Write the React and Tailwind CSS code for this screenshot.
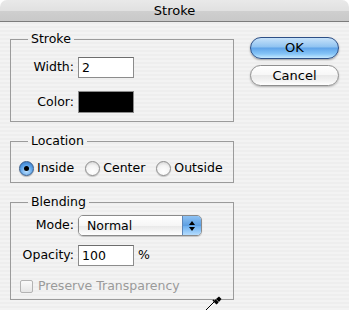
import React from "react";

const font = { fontFamily: '"DejaVu Sans", "Liberation Sans", sans-serif' };

const Radio = ({ checked, label }) => (
  <label className="flex items-center gap-[3px]">
    <span
      className={
        checked
          ? "w-[15px] h-[15px] rounded-full border border-[#3a5e8c] bg-[radial-gradient(circle_at_50%_70%,#bfe2ff_0%,#5aa0e6_55%,#2f6fbf_100%)] flex items-center justify-center shadow-[0_1px_1px_rgba(0,0,0,0.25)]"
          : "w-[15px] h-[15px] rounded-full border border-[#8d8d8d] bg-[radial-gradient(circle_at_50%_75%,#ffffff_0%,#f4f4f4_55%,#c8c8c8_100%)] shadow-[0_1px_1px_rgba(0,0,0,0.2)]"
      }
    >
      {checked && <span className="w-[5px] h-[5px] rounded-full bg-black" />}
    </span>
    <span>{label}</span>
  </label>
);

const Field = ({ legend, className, children }) => (
  <fieldset className={"border border-[#9b9b9b] px-0 m-0 " + className}>
    <legend className="ml-[17px] px-[3px] leading-[16px]">{legend}</legend>
    {children}
  </fieldset>
);

const Dropper = () => (
  <svg width="18" height="16" viewBox="0 0 18 16" className="absolute left-[205px] top-[295px]">
    <path d="M1 15 L10 6" stroke="black" strokeWidth="1" fill="none" />
    <path d="M2 15.5 L11 6.5" stroke="white" strokeWidth="1" fill="none" />
    <path d="M8 5 L12 9" stroke="black" strokeWidth="1.6" />
    <path d="M11 4 L14 1.5 L16.5 4 L14 7 Z" fill="black" />
    <path d="M10 5 L13 8" stroke="black" strokeWidth="2" />
  </svg>
);

export default function App() {
  return (
    <div
      className="relative w-[349px] h-[310px] overflow-hidden bg-white text-[12.5px] text-black"
      style={font}
    >
      <div className="w-full h-full flex flex-col rounded-t-[7px] overflow-hidden">
        {/* title bar */}
        <div className="h-[22px] shrink-0 flex items-center justify-center bg-[linear-gradient(to_bottom,#e9e9e9_0%,#e1e1e1_50%,#cfcfcf_52%,#c9c9c9_100%)] border-b border-[#7c7c7c] text-[13px]">
          Stroke
        </div>

        {/* body */}
        <div className="flex-1 flex bg-[repeating-linear-gradient(to_bottom,#eeeeee_0px,#eeeeee_2px,#f3f3f3_2px,#f3f3f3_4px)]">
          {/* left column */}
          <div className="w-[224px] ml-[10px] flex flex-col gap-[11px] pt-[9px]">
            <Field legend="Stroke" className="h-[91px]">
              <div className="flex flex-col gap-[13px] pt-[10px]">
                <div className="flex items-center">
                  <span className="w-[67px] text-right pr-[4px]">Width:</span>
                  <div className="w-[56px] h-[21px] bg-white border border-[#8c8c8c] border-t-[#6d6d6d] pl-[3px] leading-[19px]">
                    2
                  </div>
                </div>
                <div className="flex items-center">
                  <span className="w-[67px] text-right pr-[4px]">Color:</span>
                  <div className="w-[56px] h-[22px] bg-black border border-[#8c8c8c]" />
                </div>
              </div>
            </Field>

            <Field legend="Location" className="h-[50px]">
              <div className="flex items-center pl-[8px] pt-[10px] gap-[11px]">
                <Radio checked label="Inside" />
                <Radio label="Center" />
                <Radio label="Outside" />
              </div>
            </Field>

            <Field legend="Blending" className="h-[106px]">
              <div className="flex flex-col pt-[5px]">
                <div className="flex items-center">
                  <span className="w-[67px] text-right pr-[4px]">Mode:</span>
                  <div className="w-[124px] h-[21px] flex rounded-[5px] border border-[#8a8a8a] overflow-hidden shadow-[0_1px_1px_rgba(0,0,0,0.2)]">
                    <div className="flex-1 pl-[8px] leading-[19px] bg-[linear-gradient(to_bottom,#ffffff_0%,#f6f6f6_50%,#e8e8e8_52%,#ffffff_100%)]">
                      Normal
                    </div>
                    <div className="w-[19px] border-l border-[#5d86b8] flex flex-col items-center justify-center gap-[2px] bg-[linear-gradient(to_bottom,#8ec2f3_0%,#5d9fe2_50%,#6aaef0_52%,#b4dcfd_100%)]">
                      <span className="block w-0 h-0 border-l-[3px] border-r-[3px] border-b-[4px] border-l-transparent border-r-transparent border-b-black" />
                      <span className="block w-0 h-0 border-l-[3px] border-r-[3px] border-t-[4px] border-l-transparent border-r-transparent border-t-black" />
                    </div>
                  </div>
                </div>
                <div className="flex items-center mt-[9px]">
                  <span className="w-[67px] text-right pr-[4px]">Opacity:</span>
                  <div className="w-[56px] h-[21px] bg-white border border-[#8c8c8c] border-t-[#6d6d6d] pl-[3px] leading-[19px]">
                    100
                  </div>
                  <span className="ml-[4px]">%</span>
                </div>
                <div className="flex items-center mt-[11px] pl-[9px] text-[#9a9a9a]">
                  <span className="w-[13px] h-[13px] rounded-[2px] border border-[#b3b3b3] bg-[linear-gradient(to_bottom,#fafafa,#e6e6e6)]" />
                  <span className="ml-[5px]">Preserve Transparency</span>
                </div>
              </div>
            </Field>
          </div>

          {/* right column */}
          <div className="flex flex-col ml-[16px] pt-[15px] gap-[6px]">
            <button className="w-[89px] h-[22px] rounded-full border border-[#2d4f86] bg-[linear-gradient(to_bottom,#c7e2fa_0%,#8fc3f1_45%,#5fa3e8_50%,#86c5f7_80%,#c6e9ff_100%)] shadow-[0_1px_2px_rgba(0,0,0,0.35)] text-[13px] leading-[20px]">
              OK
            </button>
            <button className="w-[89px] h-[21px] rounded-full border border-[#8f8f8f] bg-[linear-gradient(to_bottom,#ffffff_0%,#f7f7f7_45%,#e9e9e9_50%,#f4f4f4_80%,#ffffff_100%)] shadow-[0_1px_2px_rgba(0,0,0,0.25)] text-[13px] leading-[19px]">
              Cancel
            </button>
          </div>
        </div>
      </div>
      <Dropper />
    </div>
  );
}
